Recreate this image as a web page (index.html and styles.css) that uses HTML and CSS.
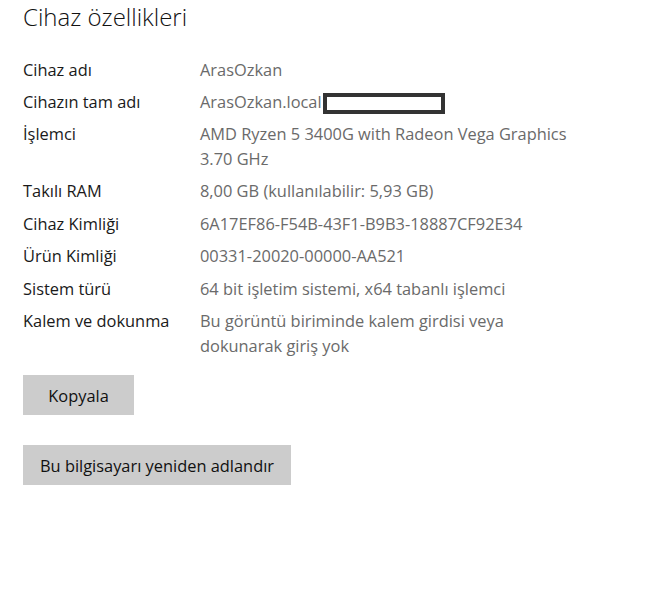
FILE: index.html
```html
<!DOCTYPE html>
<html lang="tr">
<head>
<meta charset="utf-8">
<title>Cihaz özellikleri</title>
<link rel="stylesheet" href="styles.css">
</head>
<body>
<main class="page">
  <h1 class="title">Cihaz özellikleri</h1>
  <dl class="specs">
    <div class="row"><dt>Cihaz adı</dt><dd>ArasOzkan</dd></div>
    <div class="row"><dt>Cihazın tam adı</dt><dd>ArasOzkan.local<span class="redact"></span></dd></div>
    <div class="row"><dt>İşlemci</dt><dd>AMD Ryzen 5 3400G with Radeon Vega Graphics<br>3.70 GHz</dd></div>
    <div class="row"><dt>Takılı RAM</dt><dd>8,00 GB (kullanılabilir: 5,93 GB)</dd></div>
    <div class="row"><dt>Cihaz Kimliği</dt><dd>6A17EF86-F54B-43F1-B9B3-18887CF92E34</dd></div>
    <div class="row"><dt>Ürün Kimliği</dt><dd>00331-20020-00000-AA521</dd></div>
    <div class="row"><dt>Sistem türü</dt><dd>64 bit işletim sistemi, x64 tabanlı işlemci</dd></div>
    <div class="row"><dt>Kalem ve dokunma</dt><dd>Bu görüntü biriminde kalem girdisi veya<br>dokunarak giriş yok</dd></div>
  </dl>
  <div class="actions">
    <button class="btn btn-copy" type="button">Kopyala</button>
    <button class="btn btn-rename" type="button">Bu bilgisayarı yeniden adlandır</button>
  </div>
</main>
</body>
</html>
```
FILE: styles.css
```css
html, body {
  margin: 0;
  padding: 0;
  background: #fff;
}
body {
  font-family: "Open Sans", "Noto Sans", "DejaVu Sans", sans-serif;
  color: #1a1a1a;
}
.page {
  padding: 1px 0 0 23px;
}
.title {
  margin: 0;
  font-size: 24px;
  font-weight: 300;
  line-height: 32px;
  color: #111;
  letter-spacing: 0;
}
.specs {
  margin: 25px 0 0 0;
  padding: 0;
  display: flex;
  flex-direction: column;
  gap: 8px;
}
.row {
  display: grid;
  grid-template-columns: 177px 1fr;
  font-size: 16.4px;
  line-height: 24.5px;
}
.row dt {
  margin: 0;
  color: #1a1a1a;
}
.row dd {
  margin: 0;
  color: #6a6a6a;
}
.row:nth-child(2) {
  margin-top: -1px;
}
.redact {
  display: inline-block;
  vertical-align: -6px;
  width: 114px;
  height: 13px;
  border: 4px solid #333;
  background: #fff;
  margin-left: 1px;
}
.actions {
  margin-top: 17px;
  display: flex;
  flex-direction: column;
  align-items: flex-start;
  gap: 30px;
}
.btn {
  font-family: inherit;
  font-size: 16.4px;
  color: #111;
  background: #ccc;
  border: none;
  height: 40px;
  margin: 0;
  padding: 0;
}
.btn-copy {
  width: 111px;
}
.btn-rename {
  width: 268px;
}
```
